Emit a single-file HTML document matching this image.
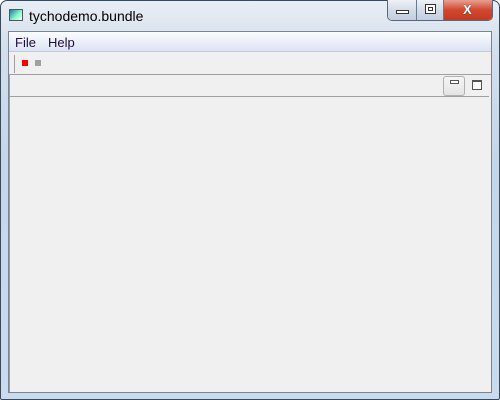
<!DOCTYPE html>
<html><head><style>
*{margin:0;padding:0;box-sizing:border-box}
body{width:500px;height:400px;overflow:hidden;font-family:"Liberation Sans",sans-serif;background:#fff}
.frame{position:absolute;left:0;top:0;width:500px;height:400px;border:1px solid #3a4a5a;border-radius:7px 7px 2px 2px;background:linear-gradient(180deg,#e9eef5 0%,#d3dfec 12%,#c4d6ea 40%,#c9dbee 100%)}
.title{position:absolute;left:28px;top:7px;font-size:14px;color:#000}
.ico{position:absolute;left:8px;top:8px;width:14px;height:12px;border:1px solid #555;background:linear-gradient(135deg,#2a7a9a,#8fc 60%,#fff)}
.btns{position:absolute;left:386px;top:-1px;height:21px;width:106px;border:1px solid #59677a;border-top:none;border-radius:0 0 5px 5px;overflow:hidden;display:flex}
.b{height:20px;background:linear-gradient(#eef2f7,#d4dce8 50%,#c3cedd);border-right:1px solid #6a7a8e;position:relative}
.cl{flex:1;background:linear-gradient(#e8a090,#d2472f 50%,#c23a22);border:none}
.client{position:absolute;left:7px;top:30px;width:484px;height:362px;border:1px solid #7a8592;background:#f0f0f0}
.menu{height:20px;background:linear-gradient(#fbfcfe,#dbe3f4);border-bottom:1px solid #c5cbd6;font-size:13px;color:#1e0d3c}
.menu span{position:absolute;top:3px}
.sep{position:absolute;left:5px;top:23px;width:1px;height:18px;background:#a0a0a0}
.panel{position:absolute;left:0;top:42px;width:482px;height:318px;border-top:1px solid #a0a0a0;border-left:1px solid #a0a0a0}
.ph{height:22px;border-bottom:1px solid #a0a0a0;width:479px;position:relative}
</style></head><body>
<div class="frame">
<div class="ico"></div>
<div class="title">tychodemo.bundle</div>
<div class="btns">
<div class="b" style="width:29px"><div style="position:absolute;left:8px;top:10px;width:13px;height:4px;border:1px solid #333;background:#fff"></div></div>
<div class="b" style="width:27px"><div style="position:absolute;left:8px;top:4px;width:11px;height:10px;border:1px solid #333;background:#fff"><div style="margin:2px;height:4px;border:1px solid #333"></div></div></div>
<div class="b cl"><div style="position:absolute;left:19px;top:2px;font-size:13px;font-weight:bold;color:#fff;text-shadow:0 0 1px #333">X</div></div>
</div>
<div class="client">
<div class="menu"><span style="left:6px">File</span><span style="left:39px">Help</span></div>
<div class="sep"></div>
<div style="position:absolute;left:13px;top:28px;width:6px;height:6px;background:#f00"></div>
<div style="position:absolute;left:26px;top:28px;width:6px;height:6px;background:#a0a0a0"></div>
<div class="panel"><div class="ph">
<div style="position:absolute;left:433px;top:1px;width:22px;height:20px;border:1px solid #b0b0b0;border-radius:3px;background:linear-gradient(#f6f6f6,#e4e4e4)"><div style="position:absolute;left:6px;top:3px;width:9px;height:4px;border:1px solid #555;background:#fff"></div></div>
<div style="position:absolute;left:462px;top:5px;width:10px;height:10px;border:1px solid #555;border-top-width:2px;background:#fff"></div>
</div></div>
</div>
</div>
</body></html>
